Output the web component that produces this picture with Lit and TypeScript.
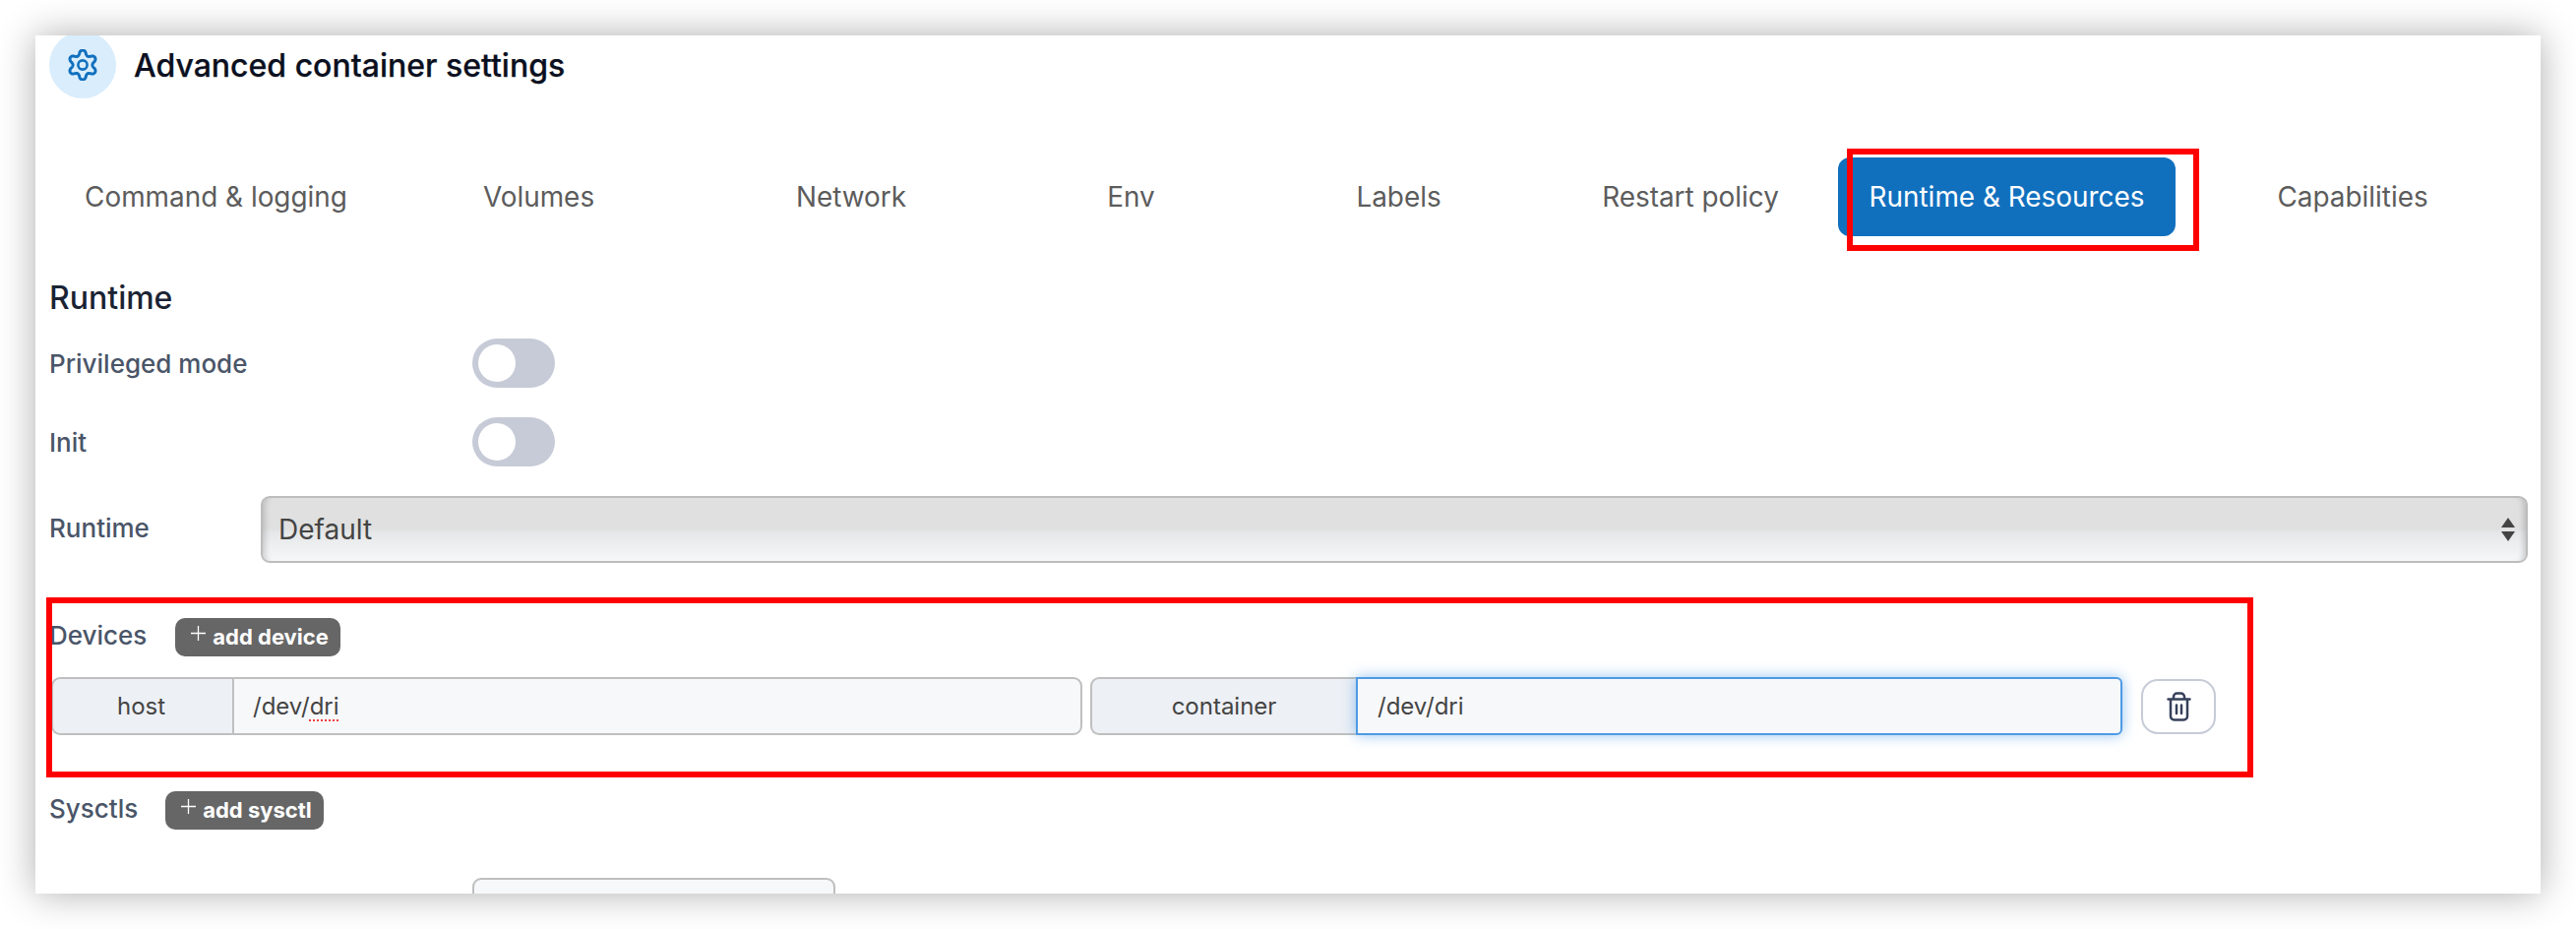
import { LitElement, html, css, svg } from "lit";
import { customElement } from "lit/decorators.js";

const TABS = ["Command & logging", "Volumes", "Network", "Env", "Labels", "Restart policy", "Runtime & Resources", "Capabilities"];

function gearPath(): string {
  const pts: string[] = [];
  for (let i = 0; i < 240; i++) {
    const t = (i / 240) * Math.PI * 2;
    const c = Math.cos(6 * t);
    const r = 12.6 + 2.4 * Math.sign(c) * Math.pow(Math.abs(c), 0.75);
    pts.push(`${(16 + r * Math.sin(t) * 0.97).toFixed(2)} ${(16 - r * Math.cos(t)).toFixed(2)}`);
  }
  return "M" + pts.join("L") + "Z";
}

@customElement("app-root")
export class AppRoot extends LitElement {
  static styles = css`
    :host { display: block; height: 944px; padding: 36px; box-sizing: border-box; overflow: hidden; background: #fff;
      font-family: Inter, "Liberation Sans", sans-serif; }
    .card { position: relative; height: 872px; background: #fff; overflow: hidden; box-shadow: 0 0 36px rgba(0,0,0,.32); padding: 0 14px; box-sizing: border-box; }
    .head { display: flex; align-items: center; gap: 18px; margin-top: -4px; height: 68px; }
    .badge { width: 68px; height: 68px; border-radius: 50%; background: #d9edfc; display: flex; align-items: center; justify-content: center; color: #1170be; }
    .title { font-size: 32px; font-weight: 500; color: #0b1020; -webkit-text-stroke: 0.25px #0b1020; }
    .tabs { display: grid; grid-template-columns: 339px 317px 318px 251px 293px 300px 343px 360px; margin-top: 60px; }
    .tab { height: 80px; display: flex; align-items: center; justify-content: center; font-size: 27.9px; color: #5c5c5c; border-radius: 12px; white-space: nowrap; }
    .tab.on { background: #1170be; color: #fff; }
    h3 { margin: 39px 0 0; font-size: 32px; line-height: 48px; font-weight: 500; color: #1a2333; }
    .sw-row { display: flex; align-items: center; height: 50px; margin-top: 30px; }
    .sw-row.first { margin-top: 17px; }
    .lbl { font-size: 26px; font-weight: 500; color: #4a5568; }
    .sw-row .lbl { width: 430px; }
    .toggle { width: 84px; height: 50px; border-radius: 25px; background: #c6cbd7; padding: 6px; box-sizing: border-box; }
    .knob { width: 38px; height: 38px; border-radius: 50%; background: #fff; }
    .sel-row { display: flex; align-items: center; margin-top: 30px; margin-right: -1px; }
    .sel-row .lbl { width: 216px; margin-right: -1px; padding-bottom: 3px; }
    .sel { flex: 1; height: 68px; box-sizing: border-box; border: 2px solid #bdbdbd; border-radius: 9px; display: flex; align-items: center; justify-content: space-between; padding: 0 11px 0 16px; font-size: 28px; color: #444;
      background: linear-gradient(#dfe0df 0, #dfe0df 48%, #e6e7e8 55%, #f6f7f9 100%);
      box-shadow: inset 8px 0 6px -6px rgba(0,0,0,.18), inset -8px 0 6px -6px rgba(0,0,0,.18); }
    .arrows { display: flex; flex-direction: column; gap: 4px; }
    .up, .dn { width: 0; height: 0; border-left: 7px solid transparent; border-right: 7px solid transparent; }
    .up { border-bottom: 10px solid #444; }
    .dn { border-top: 10px solid #444; }
    .sec { display: flex; align-items: center; gap: 29px; margin-top: 56px; height: 39px; }
    .sec .lbl { padding-bottom: 4px; }
    .sec.sys { margin-top: 57px; gap: 28px; }
    .add { height: 39px; border-radius: 10px; background: #666; color: #fff; font-size: 22px; font-weight: 700; display: flex; align-items: center; gap: 7px; padding: 0 12px 2px 16px; box-sizing: border-box; }
    .add svg { margin-top: -6px; }
    .devs { display: flex; align-items: center; margin-top: 21px; margin-left: 2px; height: 59px; }
    .grp { display: flex; height: 59px; box-sizing: border-box; font-size: 24px; color: #444; }
    .g1 { width: 1048px; }
    .g2 { width: 1049px; margin-left: 8px; }
    .addon { display: flex; flex: none; align-items: center; justify-content: center; background: #edf0f5; border: 2px solid #bfbfbf; border-right: 0; border-radius: 9px 0 0 9px; box-sizing: border-box; }
    .g1 .addon { width: 184px; padding-right: 3px; }
    .g2 .addon { width: 270px; }
    .inp { flex: 1; background: #f7f8fa; border: 2px solid #bfbfbf; border-radius: 0 9px 9px 0; display: flex; align-items: center; padding-left: 19px; box-sizing: border-box; }
    .g2 .inp { border-color: #4e9ae5; box-shadow: 0 0 14px rgba(78,154,229,.6); padding-left: 20px; border-radius: 0 6px 6px 0; position: relative; }
    .sp { text-decoration: underline dotted #f03e3e 2px; text-underline-offset: 5px; }
    .del { width: 76px; height: 56px; margin-left: 19px; box-sizing: border-box; border: 2px solid #c6cbd7; border-radius: 17px; display: flex; align-items: center; justify-content: center; color: #36415a; }
    .partial { margin: 49px 0 0 430px; width: 369px; height: 40px; box-sizing: border-box; border: 2px solid #bfbfbf; border-radius: 9px; background: #f7f8fa; }
    .mark { position: absolute; box-sizing: border-box; border: 6px solid #ff0000; pointer-events: none; }
    .m1 { left: 1841px; top: 115px; width: 358px; height: 104px; }
    .m2 { left: 11px; top: 571px; width: 2243px; height: 183px; }
  `;

  private plus() {
    return html`<svg width="15" height="15" viewBox="0 0 15 15" fill="none" stroke="currentColor" stroke-width="1.3"><path d="M7.5 0v15M0 7.5h15"/></svg>`;
  }

  render() {
    return html`<div class="card">
      <div class="head">
        <div class="badge">
          <svg width="32" height="32" viewBox="0 0 32 32" fill="none" stroke="currentColor" stroke-width="3" stroke-linejoin="round">
            ${svg`<path d=${gearPath()}/><circle cx="16" cy="16" r="4.6" stroke-width="2.6"/>`}
          </svg>
        </div>
        <div class="title">Advanced container settings</div>
      </div>
      <div class="tabs">
        ${TABS.map((t) => html`<div class="tab ${t.startsWith("Runtime") ? "on" : ""}">${t}</div>`)}
      </div>
      <h3>Runtime</h3>
      <div class="sw-row first"><div class="lbl">Privileged mode</div><div class="toggle"><div class="knob"></div></div></div>
      <div class="sw-row"><div class="lbl">Init</div><div class="toggle"><div class="knob"></div></div></div>
      <div class="sel-row"><div class="lbl">Runtime</div>
        <div class="sel"><span>Default</span><span class="arrows"><span class="up"></span><span class="dn"></span></span></div>
      </div>
      <div class="sec"><div class="lbl">Devices</div><div class="add">${this.plus()}<span>add device</span></div></div>
      <div class="devs">
        <div class="grp g1"><div class="addon">host</div><div class="inp"><span>/dev/<span class="sp">dri</span></span></div></div>
        <div class="grp g2"><div class="addon">container</div><div class="inp">/dev/dri</div></div>
        <div class="del">
          <svg width="25" height="30" viewBox="0 0 25 30" fill="none" stroke="currentColor" stroke-width="2.5" stroke-linecap="round" stroke-linejoin="round">
            ${svg`<path d="M1.5 7.5H23.5M7 7V5a3.5 3.5 0 0 1 3.5-3.5h4A3.5 3.5 0 0 1 18 5V7M4 8V25a3.5 3.5 0 0 0 3.5 3.5h10a3.5 3.5 0 0 0 3.5-3.5V8M10 13.5v8.5M15 13.5v8.5"/>`}
          </svg>
        </div>
      </div>
      <div class="sec sys"><div class="lbl">Sysctls</div><div class="add">${this.plus()}<span>add sysctl</span></div></div>
      <div class="partial"></div>
      <div class="mark m1"></div>
      <div class="mark m2"></div>
    </div>`;
  }
}
